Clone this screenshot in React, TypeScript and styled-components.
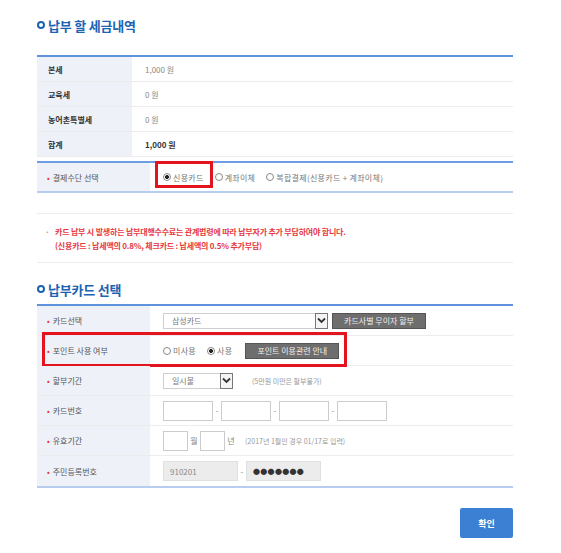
import React, { FC } from 'react'
import styled, { createGlobalStyle } from 'styled-components'

const GlobalStyle = createGlobalStyle`
  body {
    margin: 0;
    background: #fff;
    font-family: "Noto Sans CJK KR", "Noto Sans", sans-serif;
  }
`

const taxRows = [
  { label: '본세', value: '1,000 원' },
  { label: '교육세', value: '0 원' },
  { label: '농어촌특별세', value: '0 원' },
  { label: '합계', value: '1,000 원', strong: true },
]

interface RadioProps {
  checked?: boolean
  label: string
}

const Radio: FC<RadioProps> = ({ checked, label }) => (
  <RadioItem>
    <RadioDot checked={checked} />
    {label}
  </RadioItem>
)

const Chevron: FC = () => (
  <svg width="9" height="7" viewBox="0 0 9 7">
    <path d="M1 1.5 L4.5 5 L8 1.5" fill="none" stroke="#333" strokeWidth="1.8" />
  </svg>
)

const App: FC = () => {
  return (
    <>
      <GlobalStyle />
      <Page>
        <SectionTitle>
          <Ring />
          납부 할 세금내역
        </SectionTitle>

        <TaxTable>
          {taxRows.map((r) => (
            <Row key={r.label} height={25} labelWidth={95}>
              <TaxLabel>{r.label}</TaxLabel>
              <TaxValue strong={r.strong}>{r.value}</TaxValue>
            </Row>
          ))}
        </TaxTable>

        <PayTable>
          <Row height={28} labelWidth={113} last>
            <FieldLabel>결제수단 선택</FieldLabel>
            <FieldValue>
              <Radio checked label="신용카드" />
              <Radio label="계좌이체" />
              <Radio label="복합결제(신용카드 + 계좌이체)" />
            </FieldValue>
            <Highlight style={{ left: 118, top: -2, width: 58, height: 27 }} />
          </Row>
        </PayTable>

        <Notice>
          <NoticeLine>
            <NoticeBullet>·</NoticeBullet>
            카드 납부 시 발생하는 납부대행수수료는 관계법령에 따라 납부자가 추가 부담하여야 합니다.
          </NoticeLine>
          <NoticeLine>(신용카드 : 납세액의 0.8%, 체크카드 : 납세액의 0.5% 추가부담)</NoticeLine>
        </Notice>

        <SectionTitle second>
          <Ring />
          납부카드 선택
        </SectionTitle>

        <CardTable>
          <Row height={30} labelWidth={113}>
            <FieldLabel>카드선택</FieldLabel>
            <FieldValue>
              <Select width={165}>
                <span>삼성카드</span>
                <SelectArrow>
                  <Chevron />
                </SelectArrow>
              </Select>
              <GreyButton shift={-7}>카드사별 무이자 할부</GreyButton>
            </FieldValue>
          </Row>
          <Row height={30} labelWidth={113}>
            <FieldLabel>포인트 사용 여부</FieldLabel>
            <FieldValue>
              <Radio label="미사용" />
              <Radio checked label="사용" />
              <GreyButton shift={2}>포인트 이용관련 안내</GreyButton>
            </FieldValue>
            <Highlight style={{ left: 5, top: -4, width: 305, height: 35 }} />
          </Row>
          <Row height={30} labelWidth={113}>
            <FieldLabel>할부기간</FieldLabel>
            <FieldValue>
              <Select width={70}>
                <span>일시불</span>
                <SelectArrow>
                  <Chevron />
                </SelectArrow>
              </Select>
              <Hint>(5만원 미만은 할부불가)</Hint>
            </FieldValue>
          </Row>
          <Row height={30} labelWidth={113}>
            <FieldLabel>카드번호</FieldLabel>
            <FieldValue tight>
              <TextBox width={50} />
              <Dash>-</Dash>
              <TextBox width={50} />
              <Dash>-</Dash>
              <TextBox width={50} />
              <Dash>-</Dash>
              <TextBox width={50} />
            </FieldValue>
          </Row>
          <Row height={30} labelWidth={113}>
            <FieldLabel>유효기간</FieldLabel>
            <FieldValue tight>
              <TextBox width={25} />
              <Unit>월</Unit>
              <TextBox width={25} />
              <Unit>년</Unit>
              <Hint>(2017년 1월인 경우 01/17로 입력)</Hint>
            </FieldValue>
          </Row>
          <Row height={30} labelWidth={113} last>
            <FieldLabel>주민등록번호</FieldLabel>
            <FieldValue tight>
              <TextBox width={75} filled>910201</TextBox>
              <Dash>-</Dash>
              <TextBox width={75} filled masked>●●●●●●●</TextBox>
            </FieldValue>
          </Row>
        </CardTable>

        <Actions>
          <ConfirmButton>확인</ConfirmButton>
        </Actions>
      </Page>
    </>
  )
}

export default App

const Page = styled.div`
  width: 476px;
  padding: 18px 0 0 37px;
`

const SectionTitle = styled.h2<{ second?: boolean }>`
  display: flex;
  align-items: center;
  gap: 2px;
  margin: ${({ second }) => (second ? '19px 0 8px' : '0 0 23px')};
  height: 14px;
  font-size: 13px;
  font-weight: 700;
  color: #1b64b3;
  letter-spacing: -0.2px;
`

const Ring = styled.span`
  width: 4px;
  height: 4px;
  border: 2px solid #1b64b3;
  border-radius: 50%;
  margin-right: 1px;
`

const TaxTable = styled.div`
  border-top: 2px solid #5f92dc;
`

const Row = styled.div<{ height: number; labelWidth: number; last?: boolean }>`
  position: relative;
  display: grid;
  grid-template-columns: ${({ labelWidth }) => labelWidth}px 1fr;
  height: ${({ height }) => height}px;
  border-bottom: ${({ last }) => (last ? 'none' : '1px solid #ececec')};
  box-sizing: border-box;
`

const TaxLabel = styled.div`
  display: flex;
  align-items: center;
  padding-left: 11px;
  background: #eef1f8;
  font-size: 8px;
  font-weight: 700;
  color: #333;
`

const TaxValue = styled.div<{ strong?: boolean }>`
  display: flex;
  align-items: center;
  padding-left: 13px;
  font-size: 8px;
  font-weight: ${({ strong }) => (strong ? 700 : 400)};
  color: ${({ strong }) => (strong ? '#333' : '#888')};
`

const PayTable = styled.div`
  margin-top: 4px;
  border-top: 2px solid #6d9de2;
  border-bottom: 2px solid #b6cdef;
`

const CardTable = styled.div`
  border-top: 2px solid #5f92dc;
  border-bottom: 2px solid #b6cdef;
`

const FieldLabel = styled.div`
  display: flex;
  align-items: center;
  padding-left: 10px;
  background: #eef1f8;
  font-size: 8px;
  color: #555;

  &::before {
    content: '•';
    color: #e8343b;
    margin-right: 3px;
  }
`

const FieldValue = styled.div<{ tight?: boolean }>`
  display: flex;
  align-items: center;
  gap: ${({ tight }) => (tight ? '0' : '11px')};
  padding-left: 13px;
`

const RadioItem = styled.label`
  display: flex;
  align-items: center;
  gap: 2px;
  font-size: 8px;
  color: #777;
  letter-spacing: 0.3px;
`

const RadioDot = styled.span<{ checked?: boolean }>`
  width: 8px;
  height: 8px;
  box-sizing: border-box;
  border: 1px solid #888;
  border-radius: 50%;
  background: ${({ checked }) =>
    checked ? 'radial-gradient(circle, #222 0 1.8px, #fff 2.2px)' : '#fff'};
`

const Highlight = styled.div`
  position: absolute;
  border: 3px solid #e3141d;
  box-sizing: border-box;
  pointer-events: none;
`

const Notice = styled.div`
  margin-top: 20px;
  height: 50px;
  box-sizing: border-box;
  border: 1px solid #ededed;
  border-left: none;
  border-right: none;
  padding: 10px 0 0 8px;
`

const NoticeLine = styled.div`
  display: flex;
  align-items: center;
  height: 14px;
  padding-left: 10px;
  font-size: 8px;
  font-weight: 700;
  color: #e5393f;
  letter-spacing: -0.2px;
  white-space: nowrap;
`

const NoticeBullet = styled.span`
  margin-left: -10px;
  width: 10px;
  color: #e88;
`

const Select = styled.div<{ width: number }>`
  display: flex;
  align-items: center;
  justify-content: space-between;
  width: ${({ width }) => width}px;
  height: 16px;
  box-sizing: border-box;
  border: 1px solid #cfcfcf;
  padding-left: 8px;
  font-size: 8px;
  color: #777;
`

const SelectArrow = styled.span`
  display: flex;
  align-items: center;
  justify-content: center;
  width: 13px;
  height: 16px;
  margin: -1px -1px -1px 0;
  box-sizing: border-box;
  border: 1px solid #777;
  background: #f4f4f4;
`

const GreyButton = styled.span<{ shift: number }>`
  display: flex;
  align-items: center;
  justify-content: center;
  width: 94px;
  height: 16px;
  margin-left: ${({ shift }) => shift}px;
  background: #6e6e6e;
  border: 1px solid #555;
  box-sizing: border-box;
  font-size: 8px;
  color: #eee;
  white-space: nowrap;
`

const Hint = styled.span`
  margin-left: 8px;
  font-size: 7px;
  color: #999;
`

const TextBox = styled.div<{ width: number; filled?: boolean; masked?: boolean }>`
  display: flex;
  align-items: center;
  width: ${({ width }) => width}px;
  height: 20px;
  box-sizing: border-box;
  border: 1px solid ${({ filled }) => (filled ? '#e0e0e0' : '#ccc')};
  background: ${({ filled }) => (filled ? '#ececec' : '#fff')};
  padding-left: 6px;
  font-size: ${({ masked }) => (masked ? '7px' : '8px')};
  letter-spacing: ${({ masked }) => (masked ? '0.3px' : '0')};
  color: ${({ masked }) => (masked ? '#333' : '#888')};
`

const Dash = styled.span`
  width: 8px;
  text-align: center;
  font-size: 8px;
  color: #888;
`

const Unit = styled.span`
  width: 12px;
  text-align: center;
  font-size: 8px;
  color: #888;
`

const Actions = styled.div`
  display: flex;
  justify-content: flex-end;
  margin-top: 20px;
`

const ConfirmButton = styled.button`
  width: 53px;
  height: 30px;
  border: none;
  border-radius: 2px;
  background: #3b80d2;
  color: #fff;
  font-family: inherit;
  font-size: 9px;
  font-weight: 700;
`
